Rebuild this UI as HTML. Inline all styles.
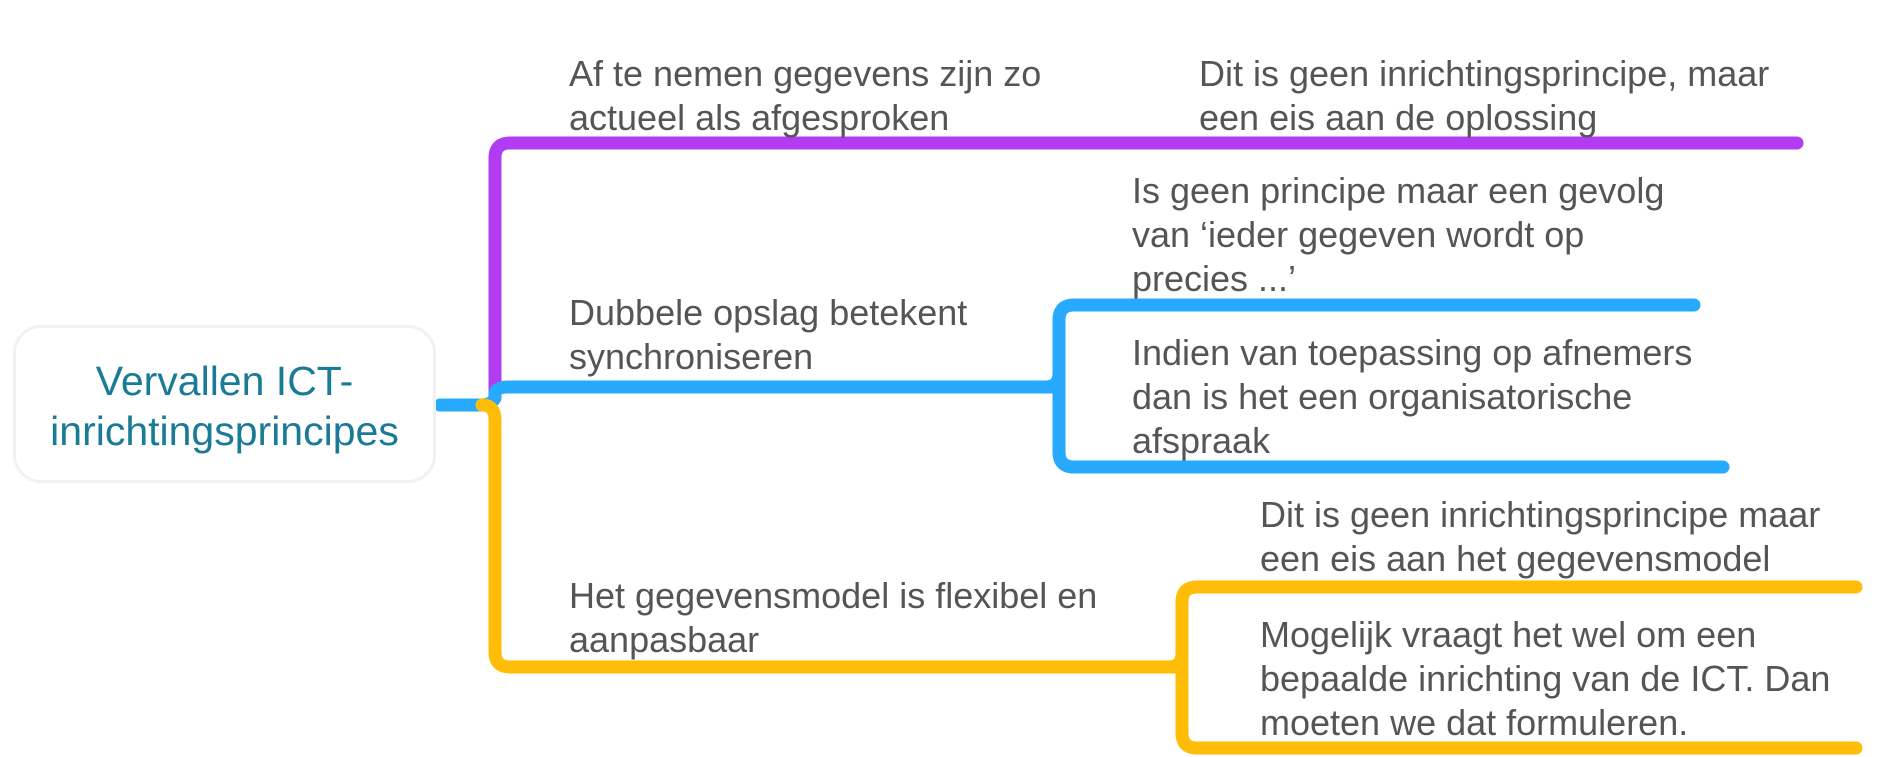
<!DOCTYPE html>
<html><head><meta charset="utf-8"><style>
html,body{margin:0;padding:0;background:#fff;width:1887px;height:757px;overflow:hidden;position:relative}
.t{position:absolute;font-family:"Liberation Sans",Arial,sans-serif;font-size:36px;line-height:44px;color:#555;white-space:nowrap}
.root{position:absolute;left:13px;top:325px;width:417px;height:152px;border:3px solid #f1f1f1;border-radius:28px;background:#fff}
.rt{position:absolute;left:13px;width:423px;top:356px;text-align:center;font-family:"Liberation Sans",Arial,sans-serif;font-size:41px;line-height:50px;color:#1a7b96;white-space:nowrap}
</style></head><body>
<svg width="1887" height="757" style="position:absolute;left:0;top:0" fill="none" stroke-width="13" stroke-linecap="round">
<path d="M495 398 L495 158 Q495 143 510 143 L1797 143" stroke="#b23cf2"/>
<path d="M1000 387 L1045 387 Q1059 387 1059 373 L1059 320 Q1059 305 1074 305 L1694 305 M1059 373 L1059 452 Q1059 467 1074 467 L1723 467" stroke="#27aafe"/>
<path d="M440 405 L480 405 Q495 405 495 395 Q495 387 508 387 L1054 387" stroke="#27aafe"/>
<path d="M1120 667 L1168 667 Q1182 667 1182 653 L1182 602 Q1182 587 1197 587 L1856 587 M1182 653 L1182 733 Q1182 748 1197 748 L1856 748" stroke="#ffbd0a"/>
<path d="M482 405 Q495 405 495 420 L495 652 Q495 667 510 667 L1176 667" stroke="#ffbd0a"/>
</svg>
<div class="root"></div>
<div class="rt">Vervallen ICT-<br>inrichtingsprincipes</div>
<div class="t" style="left:569px;top:52px">Af te nemen gegevens zijn zo<br>actueel als afgesproken</div>
<div class="t" style="left:1199px;top:52px">Dit is geen inrichtingsprincipe, maar<br>een eis aan de oplossing</div>
<div class="t" style="left:1132px;top:169px">Is geen principe maar een gevolg<br>van ‘ieder gegeven wordt op<br>precies ...’</div>
<div class="t" style="left:569px;top:291px">Dubbele opslag betekent<br>synchroniseren</div>
<div class="t" style="left:1132px;top:331px">Indien van toepassing op afnemers<br>dan is het een organisatorische<br>afspraak</div>
<div class="t" style="left:1260px;top:493px">Dit is geen inrichtingsprincipe maar<br>een eis aan het gegevensmodel</div>
<div class="t" style="left:569px;top:574px">Het gegevensmodel is flexibel en<br>aanpasbaar</div>
<div class="t" style="left:1260px;top:613px">Mogelijk vraagt het wel om een<br>bepaalde inrichting van de ICT. Dan<br>moeten we dat formuleren.</div>
</body></html>
